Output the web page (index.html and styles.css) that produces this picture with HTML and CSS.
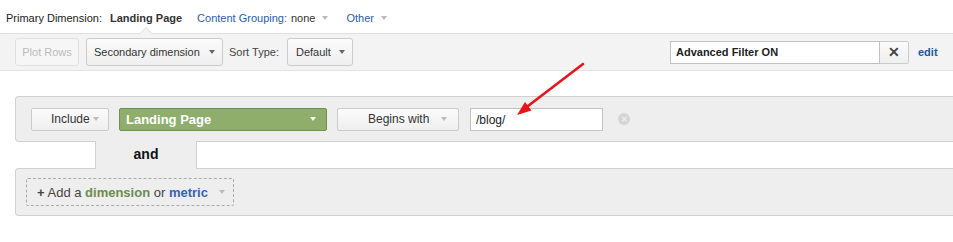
FILE: index.html
```html
<!DOCTYPE html>
<html lang="en">
<head>
<meta charset="UTF-8">
<title>Advanced Filter</title>
<link rel="stylesheet" href="styles.css">
</head>
<body>

<!-- primary dimension -->
<div class="dims">
  <span class="lbl">Primary Dimension:</span>
  <span class="cur">Landing Page</span>
  <span class="lnk">Content Grouping:</span>
  <span class="val">none</span><i class="caret lt"></i>
  <span class="lnk other">Other</span><i class="caret lt"></i>
</div>

<!-- toolbar -->
<div class="bar">
  <button class="btn off">Plot Rows</button>
  <button class="btn sec"><span>Secondary dimension</span><i class="caret"></i></button>
  <span class="sort">Sort Type:</span>
  <button class="btn def"><span>Default</span><i class="caret"></i></button>
  <div class="grow"></div>
  <div class="adv">Advanced Filter ON</div>
  <button class="btn clr">&#x2715;</button>
  <a class="edit">edit</a>
</div>

<!-- filter builder -->
<div class="filters">
  <div class="panel row">
    <button class="btn sm inc"><span>Include</span><i class="caret lt"></i></button>
    <button class="btn sm dim"><span>Landing Page</span><i class="caret wh"></i></button>
    <button class="btn sm beg"><span>Begins with</span><i class="caret lt"></i></button>
    <input class="val-in" value="/blog/">
    <span class="rm">&#x2715;</span>
  </div>
  <div class="tab">and</div>
  <div class="panel add-row">
    <div class="add">
      <span><b>+</b> Add a <b class="g">dimension</b> or <b class="b">metric</b></span>
      <i class="caret lt"></i>
    </div>
  </div>
</div>

<!-- annotation -->
<svg class="arrow" width="90" height="70" viewBox="0 0 90 70">
  <line x1="81" y1="7" x2="26" y2="49" stroke="#e8141b" stroke-width="2.6" stroke-linecap="round"/>
  <polygon points="15,58 23,45 29.5,53.5" fill="#e8141b"/>
</svg>

</body>
</html>
```

FILE: styles.css
```css
*{box-sizing:border-box}
body{
  margin:0;
  font-family:'Liberation Sans',Arial,sans-serif;
  font-size:11px;color:#222;background:#fff;
  position:relative;width:953px;height:242px;overflow:hidden}
button{font-family:inherit;font-size:11px;color:#333;white-space:nowrap}

/* ------- carets ------- */
.caret{
  display:inline-block;width:0;height:0;flex-shrink:0;
  border-left:3.5px solid transparent;border-right:3.5px solid transparent;
  border-top:4px solid #666}
.caret.lt{border-top-color:#bbb}
.caret.wh{border-top-color:#fff}

/* ------- primary dimension ------- */
.dims{height:33px;display:flex;align-items:center;padding-left:6px;padding-top:3px;white-space:nowrap}
.dims .lbl{color:#222}
.dims .cur{font-weight:bold;color:#333;margin-left:8px;margin-right:15px}
.dims .lnk{color:#2a5db0}
.dims .val{color:#333;margin-left:4px}
.dims .caret{margin-left:7px}
.dims .other{margin-left:18px}

/* ------- toolbar ------- */
.bar{
  position:relative;
  height:38px;display:flex;align-items:center;
  padding:0 13px 0 15px;
  background:#f3f3f3;border-top:1px solid #dedede;border-bottom:1px solid #e3e3e3}
.bar:before,.bar:after{
  content:"";position:absolute;left:139px;top:-7px;
  border:7px solid transparent;border-bottom-color:#dedede;border-top:0}
.bar:after{top:-6px;border-bottom-color:#f3f3f3;left:140px;border-width:0 6px 6px}
.btn{
  height:28px;padding:0 7px;border:1px solid #cbcbcb;border-radius:3px;
  background:linear-gradient(#fbfbfb,#efefef);flex-shrink:0;
  display:inline-flex;align-items:center;justify-content:space-between;cursor:pointer}
.btn.off{width:64px;color:#bbb;border-color:#e0e0e0;background:#f6f6f6;justify-content:center}
.btn.sec{width:137px;margin-left:7px}
.sort{margin-left:6px;color:#444}
.btn.def{width:66px;margin-left:8px;padding:0 7px 0 8px}
.grow{flex:1}
.adv{
  width:210px;height:23px;border:1px solid #c2c2c2;background:#fff;
  font-weight:bold;color:#222;padding:0 5px;display:flex;align-items:center}
.btn.clr{
  width:29px;height:23px;border-radius:0 2px 2px 0;border-left:0;
  padding:0;font-size:14px;color:#444;font-weight:bold;justify-content:center}
.edit{margin-left:9px;width:22px;color:#1a5a9a;font-weight:bold;cursor:pointer}

/* ------- filter builder ------- */
.filters{margin:25px 0 0 15px}
.panel{
  background:#eee;border:1px solid #d0d0d0;border-right:0;
  border-radius:4px 0 0 4px}
.row{height:46px;display:flex;align-items:center;padding-left:15px}
.btn.sm{height:23px;border-radius:2px;font-size:12px}
.btn.inc{width:78px;padding:0 9px 0 19px;justify-content:flex-start}
.btn.inc .caret{margin-left:3px}
.btn.dim{
  width:208px;margin-left:10px;padding:0 10px 0 6px;
  background:#8fae6c;border-color:#718f52;color:#fff;
  font-weight:bold;font-size:13px}
.btn.beg{width:122px;margin-left:10px;padding:0 9px 0 30px;justify-content:flex-start}
.btn.beg .caret{margin-left:12px}
.val-in{
  width:133px;height:23px;margin-left:11px;border:1px solid #c2c2c2;
  font-family:inherit;font-size:12px;padding:2px 5px 0;color:#222}
.rm{
  width:12px;height:12px;margin-left:15px;border-radius:50%;
  background:#d4d4d4;color:#eee;font-size:8px;font-weight:bold;
  display:flex;align-items:center;justify-content:center}
.tab{
  position:relative;z-index:1;
  width:102px;height:28px;margin:-1px 0 -1px 80px;
  background:#eee;border-left:1px solid #d0d0d0;border-right:1px solid #d0d0d0;
  font-weight:bold;font-size:14px;color:#111;
  display:flex;align-items:center;justify-content:center;padding-bottom:2px}
.add-row{height:48px;padding:9px 0 0 10px}
.add{
  width:208px;height:28px;border:1px dashed #aaa;border-radius:2px;
  display:flex;align-items:center;padding-left:10px;
  font-size:13px;color:#444;white-space:nowrap}
.add b{color:#444}
.add .g{color:#6a8d4e}
.add .b{color:#3565b5}
.add .caret{margin-left:11px}

/* ------- annotation ------- */
.arrow{position:absolute;left:502px;top:57px}
```
